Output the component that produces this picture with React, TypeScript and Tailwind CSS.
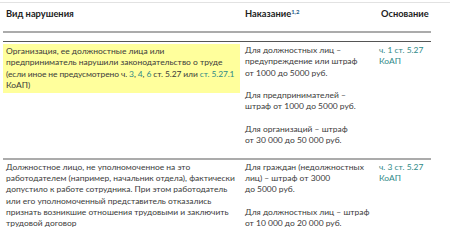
import React from "react";

const L = ({ children }: { children: React.ReactNode }) => (
  <span className="text-[#2f8a88]">{children}</span>
);

export default function App() {
  return (
    <div className="w-[450px] h-[244px] overflow-hidden bg-white text-[#3a3a3a] text-[8.45px] leading-[11.2px] font-['Lato',sans-serif]">
      <div className="mt-[2px] h-px bg-[#e2e2e2]" />
      <div className="ml-[3px] w-[428px]">
        <div className="grid grid-cols-[237px_139px_52px] pt-[5px] pb-[12px] text-[9.3px] font-bold text-[#222]">
          <div className="pl-[3px]">Вид нарушения</div>
          <div className="pl-[5px]">
            Наказание<sup className="text-[6px] text-[#1f5f8a] font-bold">1,2</sup>
          </div>
          <div className="pl-[2px]">Основание</div>
        </div>
        <div className="h-[2px] bg-[#ababab]" />
        <div className="h-[8px]" />
        <div className="h-px bg-[#555]" />
        <div className="grid grid-cols-[237px_139px_52px] pt-[2px] pb-[12px]">
          <div>
            <div className="bg-[#ffff9c] pl-[3px] pt-[2px] pb-[2px] whitespace-nowrap">
              Организация, ее должностные лица или
              <br />
              предприниматель нарушили законодательство о труде
              <br />
              <span className="tracking-[-0.1px]">
                (если иное не предусмотрено ч. <L>3</L>, <L>4</L>, <L>6</L> ст. 5.27 или <L>ст. 5.27.1</L>
              </span>
              <br />
              КоАП)
            </div>
          </div>
          <div className="pl-[5px] pt-[1px] flex flex-col gap-[11.2px] whitespace-nowrap">
            <div>
              Для должностных лиц –<br />
              предупреждение или штраф<br />
              от 1000 до 5000 руб.
            </div>
            <div>
              Для предпринимателей –<br />
              штраф от 1000 до 5000 руб.
            </div>
            <div>
              Для организаций – штраф<br />
              от 30 000 до 50 000 руб.
            </div>
          </div>
          <div className="pt-[1px] whitespace-nowrap">
            <L>
              ч. 1 ст. 5.27
              <br />
              КоАП
            </L>
          </div>
        </div>
        <div className="h-[2px] bg-[#ababab]" />
        <div className="grid grid-cols-[237px_139px_52px] pt-[2px]">
          <div className="pl-[3px] whitespace-nowrap">
            Должностное лицо, не уполномоченное на это
            <br />
            работодателем (например, начальник отдела), фактически
            <br />
            допустило к работе сотрудника. При этом работодатель
            <br />
            или его уполномоченный представитель отказались
            <br />
            признать возникшие отношения трудовыми и заключить
            <br />
            трудовой договор
          </div>
          <div className="pl-[5px] flex flex-col gap-[11.2px] whitespace-nowrap">
            <div>
              Для граждан (недолжностных<br />
              лиц) – штраф от 3000<br />
              до 5000 руб.
            </div>
            <div>
              Для должностных лиц – штраф<br />
              от 10 000 до 20 000 руб.
            </div>
          </div>
          <div className="whitespace-nowrap">
            <L>
              ч. 3 ст. 5.27
              <br />
              КоАП
            </L>
          </div>
        </div>
      </div>
    </div>
  );
}
